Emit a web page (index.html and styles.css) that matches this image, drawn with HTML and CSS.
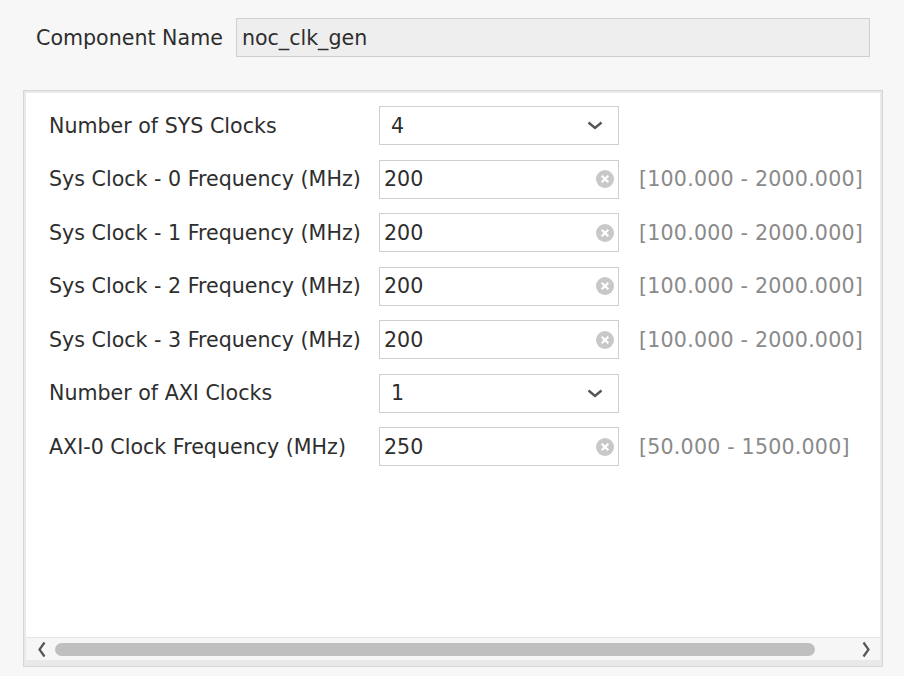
FILE: index.html
```html
<!DOCTYPE html>
<html>
<head>
<meta charset="utf-8">
<link rel="stylesheet" href="styles.css">
</head>
<body>
<div class="page">
  <div class="header">
    <span class="hlabel">Component Name</span>
    <div class="name-input">noc_clk_gen</div>
  </div>
  <div class="panel">
    <div class="panel-inner">
      <div class="panel-body">
        <div class="form">
          <div class="label">Number of SYS Clocks</div>
          <div class="box select"><span>4</span><svg class="chev" width="16" height="9" viewBox="0 0 16 9"><polyline points="1.5,1.5 8,7 14.5,1.5" fill="none" stroke="#555" stroke-width="2.4"/></svg></div>
          <div class="range"></div>

          <div class="label">Sys Clock - 0 Frequency (MHz)</div>
          <div class="box text"><span>200</span><svg class="clear" width="18" height="18" viewBox="0 0 18 18"><circle cx="9" cy="9" r="9" fill="#c8c8c8"/><path d="M5.7 5.7 L12.3 12.3 M12.3 5.7 L5.7 12.3" stroke="#fff" stroke-width="2.2"/></svg></div>
          <div class="range">[100.000 - 2000.000]</div>

          <div class="label">Sys Clock - 1 Frequency (MHz)</div>
          <div class="box text"><span>200</span><svg class="clear" width="18" height="18" viewBox="0 0 18 18"><circle cx="9" cy="9" r="9" fill="#c8c8c8"/><path d="M5.7 5.7 L12.3 12.3 M12.3 5.7 L5.7 12.3" stroke="#fff" stroke-width="2.2"/></svg></div>
          <div class="range">[100.000 - 2000.000]</div>

          <div class="label">Sys Clock - 2 Frequency (MHz)</div>
          <div class="box text"><span>200</span><svg class="clear" width="18" height="18" viewBox="0 0 18 18"><circle cx="9" cy="9" r="9" fill="#c8c8c8"/><path d="M5.7 5.7 L12.3 12.3 M12.3 5.7 L5.7 12.3" stroke="#fff" stroke-width="2.2"/></svg></div>
          <div class="range">[100.000 - 2000.000]</div>

          <div class="label">Sys Clock - 3 Frequency (MHz)</div>
          <div class="box text"><span>200</span><svg class="clear" width="18" height="18" viewBox="0 0 18 18"><circle cx="9" cy="9" r="9" fill="#c8c8c8"/><path d="M5.7 5.7 L12.3 12.3 M12.3 5.7 L5.7 12.3" stroke="#fff" stroke-width="2.2"/></svg></div>
          <div class="range">[100.000 - 2000.000]</div>

          <div class="label">Number of AXI Clocks</div>
          <div class="box select"><span>1</span><svg class="chev" width="16" height="9" viewBox="0 0 16 9"><polyline points="1.5,1.5 8,7 14.5,1.5" fill="none" stroke="#555" stroke-width="2.4"/></svg></div>
          <div class="range"></div>

          <div class="label">AXI-0 Clock Frequency (MHz)</div>
          <div class="box text"><span>250</span><svg class="clear" width="18" height="18" viewBox="0 0 18 18"><circle cx="9" cy="9" r="9" fill="#c8c8c8"/><path d="M5.7 5.7 L12.3 12.3 M12.3 5.7 L5.7 12.3" stroke="#fff" stroke-width="2.2"/></svg></div>
          <div class="range">[50.000 - 1500.000]</div>
        </div>
      </div>
      <div class="hscroll">
        <svg class="arrow" width="8" height="17" viewBox="0 0 8 17"><polyline points="6.5,1.5 1.5,8.5 6.5,15.5" fill="none" stroke="#555" stroke-width="2.2"/></svg>
        <div class="track"><div class="thumb"></div></div>
        <svg class="arrow" width="8" height="17" viewBox="0 0 8 17"><polyline points="1.5,1.5 6.5,8.5 1.5,15.5" fill="none" stroke="#555" stroke-width="2.2"/></svg>
      </div>
    </div>
  </div>
</div>
</body>
</html>
```

FILE: styles.css
```css
html, body {
  margin: 0;
  padding: 0;
  background: #f7f7f7;
}

.page {
  width: 904px;
  height: 676px;
  font-family: "DejaVu Sans", sans-serif;
  font-size: 20.6px;
  color: #2e2e2e;
  display: flex;
  flex-direction: column;
}

.header {
  display: flex;
  align-items: center;
  padding: 18px 34px 0 36px;
  gap: 13px;
}

.name-input {
  flex: 1;
  height: 37px;
  background: #eeeeee;
  border: 1px solid #cfcfcf;
  display: flex;
  align-items: center;
  padding-left: 5px;
  box-sizing: content-box;
}

.panel {
  margin: 33px 21px 0 23px;
  height: 571px;
  border: 1px solid #d6d6d6;
  background: #e9e9e9;
  padding: 2px;
  display: flex;
}

.panel-inner {
  flex: 1;
  background: #fff;
  display: flex;
  flex-direction: column;
}

.panel-body {
  flex: 1;
  padding: 13px 0 0 23px;
}

.form {
  display: grid;
  grid-template-columns: 330px 240px max-content;
  grid-auto-rows: 39px;
  row-gap: 14.5px;
  align-items: center;
}

.label {
  white-space: nowrap;
}

.box {
  height: 37px;
  border: 1px solid #cfcfcf;
  background: #fff;
  display: flex;
  align-items: center;
  justify-content: space-between;
}

.select {
  padding: 0 15px 0 11px;
}

.text {
  padding: 0 4px 0 4px;
}

.range {
  margin-left: 20px;
  color: #8a8a8a;
  white-space: nowrap;
  letter-spacing: 0.2px;
}

.hscroll {
  height: 22px;
  border-top: 1px solid #e6e6e6;
  border-bottom: 4px solid #e9e9e9;
  background: #f6f6f6;
  display: flex;
  align-items: center;
  padding: 0 10px 0 12px;
  gap: 9px;
}

.track {
  flex: 1;
  display: flex;
  align-items: center;
  padding-right: 38px;
}

.thumb {
  flex: 1;
  height: 13px;
  border-radius: 7px;
  background: #bfbfbf;
}
```
